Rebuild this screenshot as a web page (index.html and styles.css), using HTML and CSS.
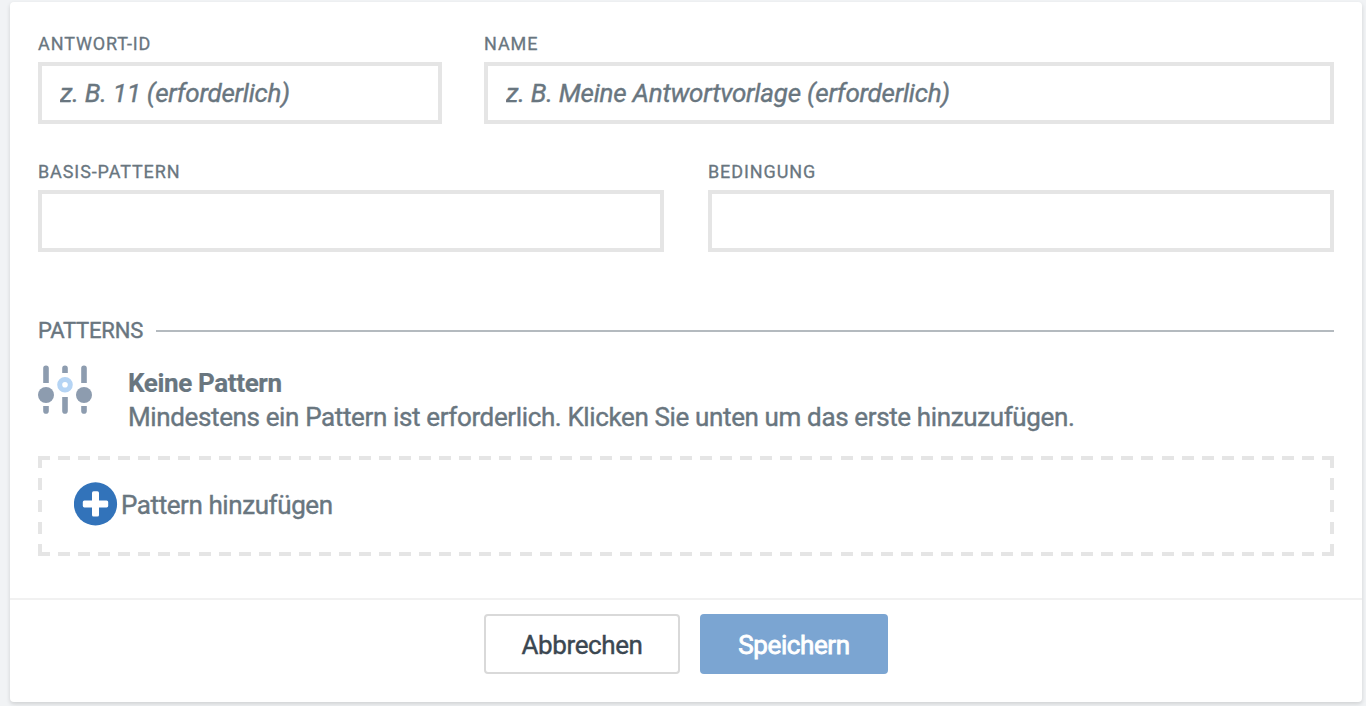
FILE: index.html
```html
<!DOCTYPE html>
<html lang="de">
<head>
<meta charset="utf-8">
<title>Antwortvorlage</title>
<link rel="stylesheet" href="styles.css">
</head>
<body>
<form class="card">
  <div class="card-body">
    <div class="row row-top">
      <label class="field"><span class="label">ANTWORT-ID</span><input class="input" type="text" placeholder="z. B. 11 (erforderlich)"></label>
      <label class="field"><span class="label">NAME</span><input class="input" type="text" placeholder="z. B. Meine Antwortvorlage (erforderlich)"></label>
    </div>
    <div class="row row-half">
      <label class="field"><span class="label">BASIS-PATTERN</span><input class="input" type="text"></label>
      <label class="field"><span class="label">BEDINGUNG</span><input class="input" type="text"></label>
    </div>
    <h2 class="section-title"><span>PATTERNS</span></h2>
    <div class="empty">
      <svg class="empty-icon" width="54" height="50" viewBox="0 0 54 50">
        <g stroke="#8d9caf" stroke-width="5.6" stroke-linecap="round">
          <path d="M8 4.3v15M8 40v6.9M27 4.3v6M27 32v14.900M46 4.3v15M46 40v6.9"/>
        </g>
        <g fill="#fff">
          <path d="M4 19h8v5H4zM4 37h8v5H4zM23 9h8v5h-8zM23 28h8v5h-8zM42 19h8v5h-8zM42 37h8v5h-8z"/>
        </g>
        <circle cx="8" cy="31" r="8" fill="#8d9caf"/>
        <circle cx="46" cy="31" r="8" fill="#8d9caf"/>
        <circle cx="27" cy="20.8" r="5.3" fill="#fff" stroke="#b5d4f4" stroke-width="5"/>
      </svg>
      <div class="empty-text">
        <strong class="empty-title">Keine Pattern</strong>
        <p class="empty-hint">Mindestens ein Pattern ist erforderlich. Klicken Sie unten um das erste hinzuzufügen.</p>
      </div>
    </div>
    <button class="add" type="button">
      <svg class="add-icon" width="44" height="44" viewBox="0 0 44 44">
        <circle cx="21.5" cy="21.9" r="21.6" fill="#3273ba"/>
        <rect x="18" y="9.200" width="7" height="25.400" rx="1.6" fill="#fff"/>
        <rect x="8.8" y="18.400" width="25.400" height="7" rx="1.6" fill="#fff"/>
      </svg>
      <span class="add-text">Pattern hinzufügen</span>
    </button>
  </div>
  <div class="card-footer">
    <button class="btn btn-cancel" type="button">Abbrechen</button>
    <button class="btn btn-save" type="button">Speichern</button>
  </div>
</form>
</body>
</html>
```

FILE: styles.css
```css
* { box-sizing: border-box; }

body {
  margin: 0;
  height: 706px;
  overflow: hidden;
  padding: 2px 4px 4px 10px;
  background: #f1f3f5;
  font-family: Roboto, sans-serif;
  color: #69767f;
  -webkit-text-stroke: 0.4px currentColor;
}

.card {
  display: flex;
  flex-direction: column;
  height: 700px;
  background: #fff;
  border-radius: 4px;
  box-shadow: 0 2px 4px rgba(0, 0, 0, 0.14);
}

.card-body {
  height: 596px;
  padding: 32px 28px 0;
}

.row { display: grid; }
.row-top { grid-template-columns: 404px 1fr; column-gap: 42px; }
.row-half { grid-template-columns: 1fr 1fr; column-gap: 44px; margin-top: 38px; }

.field { display: flex; flex-direction: column; }

.label {
  height: 28px;
  line-height: 19px;
  font-size: 18px;
  letter-spacing: 0.9px;
  -webkit-text-stroke-width: 0.3px;
}

.input {
  width: 100%;
  height: 62px;
  padding: 0 17px 0 18px;
  border: 4px solid #e5e5e5;
  border-radius: 0;
  outline: 0;
  background: #fff;
  font: 26px Roboto, sans-serif;
  letter-spacing: -0.25px;
  color: #69767f;
}

.input::placeholder { color: #69767f; font-style: italic; opacity: 1; }

.section-title {
  display: flex;
  align-items: center;
  gap: 13px;
  height: 30px;
  margin: 64px 0 0;
  font-size: 22px;
  font-weight: 400;
  line-height: 28px;
  letter-spacing: -0.2px;
}

.section-title::after {
  content: "";
  flex: 1;
  height: 2px;
  background: #b4babf;
}

.empty { display: flex; height: 110px; padding-top: 18px; }
.empty-icon { flex: none; margin-right: 36px; }
.empty-text { padding-top: 2px; letter-spacing: -0.37px; }
.empty-title { display: block; font-size: 26px; line-height: 34px; font-weight: 700; -webkit-text-stroke-width: 0.2px; }
.empty-hint { margin: 0; font-size: 26px; line-height: 35px; white-space: nowrap; }

/* Dashed frame: 12px dashes, spaced evenly on each side */
.add {
  display: flex;
  align-items: center;
  gap: 3px;
  width: 100%;
  height: 100px;
  padding: 0 0 4px 36px;
  border: 0;
  font: 26px Roboto, sans-serif;
  letter-spacing: -0.42px;
  color: #69767f;
  background:
    repeating-linear-gradient(90deg, #e5e5e5 0 12px, transparent 12px 20.0625px) top / 100% 4px no-repeat,
    repeating-linear-gradient(90deg, #e5e5e5 0 12px, transparent 12px 20.0625px) bottom / 100% 4px no-repeat,
    repeating-linear-gradient(#e5e5e5 0 12px, transparent 12px 22px) left / 4px 100% no-repeat,
    repeating-linear-gradient(#e5e5e5 0 12px, transparent 12px 22px) right / 4px 100% no-repeat;
}

.add-text { padding-top: 2px; }

.card-footer {
  display: flex;
  justify-content: center;
  gap: 20px;
  height: 104px;
  padding-top: 14px;
  border-top: 2px solid #f1f1f1;
}

.btn {
  height: 60px;
  padding: 2px 0 0;
  border-radius: 4px;
  font: 26px Roboto, sans-serif;
  letter-spacing: -0.4px;
}

.btn-cancel { width: 196px; border: 2px solid #d9d9d9; background: #fff; color: #3b4751; }
.btn-save { width: 188px; border: 0; background: #7ba5d2; color: #fff; -webkit-text-stroke-width: 0.8px; }
```
